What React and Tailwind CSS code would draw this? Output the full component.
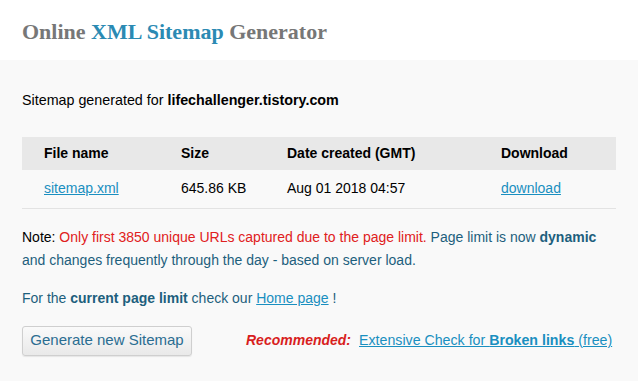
export default function App() {
  return (
    <div className="w-[638px] h-[381px] overflow-hidden bg-[#f9f9f9] font-['Liberation_Sans',Arial,sans-serif] text-[14px] text-black">
      <div className="h-[60px] bg-white pl-[22px] pt-[18px]">
        <h1 className="font-['Liberation_Serif','Times_New_Roman',serif] font-bold text-[22px] leading-[28px] text-[#777777]">
          Online <span className="text-[#2b8ab3]">XML Sitemap</span> Generator
        </h1>
      </div>
      <div className="px-[22px]">
        <p className="pt-[30px] leading-[20px] text-[14.3px]">
          Sitemap generated for <b>lifechallenger.tistory.com</b>
        </p>
        <table className="mt-[27px] w-[594px] border-collapse text-left">
          <thead>
            <tr className="bg-[#e8e8e8] h-[33px]">
              <th className="pl-[22px] w-[159px] font-bold">File name</th>
              <th className="w-[106px] font-bold">Size</th>
              <th className="w-[214px] font-bold">Date created (GMT)</th>
              <th className="font-bold">Download</th>
            </tr>
          </thead>
          <tbody>
            <tr className="h-[38px] border-b border-[#e3e3e3]">
              <td className="pl-[22px]">
                <a href="#" className="text-[#1a8fc0] underline">sitemap.xml</a>
              </td>
              <td>645.86 KB</td>
              <td>Aug 01 2018 04:57</td>
              <td>
                <a href="#" className="text-[#1a8fc0] underline">download</a>
              </td>
            </tr>
          </tbody>
        </table>
        <p className="mt-[17px] leading-[23px] text-[#1d5f7d]">
          <span className="text-black">Note: </span>
          <span className="text-[#e02020]">Only first 3850 unique URLs captured due to the page limit.</span>{" "}
          Page limit is now <b>dynamic</b> and changes frequently through the day - based on server load.
        </p>
        <p className="mt-[15px] leading-[23px] text-[#1d5f7d]">
          For the <b>current page limit</b> check our{" "}
          <a href="#" className="text-[#1a8fc0] underline">Home page</a> !
        </p>
        <div className="mt-[16px] flex items-center">
          <button className="h-[30px] w-[170px] rounded-[3px] border border-[#cfcfcf] bg-gradient-to-b from-[#fafafa] to-[#e9e9e9] text-[15px] text-[#2a6d91] shadow-[0_1px_1px_rgba(0,0,0,0.08)]">
            Generate new Sitemap
          </button>
          <span className="ml-[54px] font-bold italic text-[#d81e1e]">Recommended:</span>
          <a href="#" className="ml-[8px] text-[14.2px] text-[#1a8fc0] underline">
            Extensive Check for <b>Broken links</b> (free)
          </a>
        </div>
      </div>
    </div>
  );
}
